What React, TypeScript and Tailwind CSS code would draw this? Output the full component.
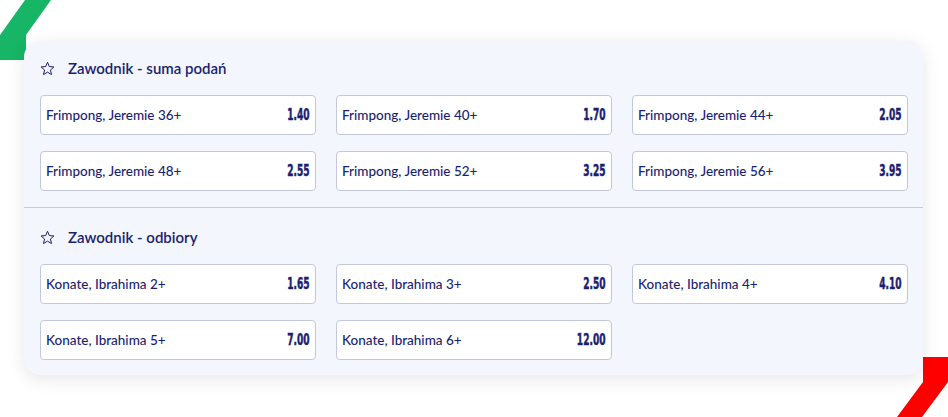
import React from 'react';

type Pick = { label: string; odds: string };

const sections: { title: string; picks: Pick[] }[] = [
  {
    title: 'Zawodnik - suma podań',
    picks: [
      { label: 'Frimpong, Jeremie 36+', odds: '1.40' },
      { label: 'Frimpong, Jeremie 40+', odds: '1.70' },
      { label: 'Frimpong, Jeremie 44+', odds: '2.05' },
      { label: 'Frimpong, Jeremie 48+', odds: '2.55' },
      { label: 'Frimpong, Jeremie 52+', odds: '3.25' },
      { label: 'Frimpong, Jeremie 56+', odds: '3.95' },
    ],
  },
  {
    title: 'Zawodnik - odbiory',
    picks: [
      { label: 'Konate, Ibrahima 2+', odds: '1.65' },
      { label: 'Konate, Ibrahima 3+', odds: '2.50' },
      { label: 'Konate, Ibrahima 4+', odds: '4.10' },
      { label: 'Konate, Ibrahima 5+', odds: '7.00' },
      { label: 'Konate, Ibrahima 6+', odds: '12.00' },
    ],
  },
];

function StarIcon() {
  return (
    <svg width="15" height="15" viewBox="0 0 24 24" fill="none" stroke="#1b1f70" strokeWidth="1.6" strokeLinejoin="miter">
      <polygon points="12,2 14.9,8.9 22.3,9.5 16.7,14.4 18.4,21.7 12,17.8 5.6,21.7 7.3,14.4 1.7,9.5 9.1,8.9" />
    </svg>
  );
}

function OddsButton({ pick }: { pick: Pick }) {
  return (
    <div className="h-10 bg-white border border-[#c3c7dc] rounded-[4px] flex items-center justify-between pl-[5px] pr-[5px] cursor-pointer">
      <span className="text-[13.5px] text-[#1b1f70] font-medium" style={{ fontFamily: 'Lato, sans-serif' }}>
        {pick.label}
      </span>
      <span
        className="inline-block text-[16px] font-bold text-[#1b1f70] scale-x-[0.63] origin-right [-webkit-text-stroke:0.5px_#1b1f70]"
        style={{ fontFamily: '"DejaVu Sans Condensed", "DejaVu Sans", sans-serif' }}
      >
        {pick.odds}
      </span>
    </div>
  );
}

export default function App() {
  return (
    <div className="relative w-[948px] h-[417px] bg-white overflow-hidden" style={{ fontFamily: 'Lato, sans-serif' }}>
      {/* corner decorations */}
      <svg className="absolute left-0 top-0" width="60" height="62">
        <polygon points="25,0 51,0 26,35 26,60 0,60 0,35" fill="#17b566" />
      </svg>
      <svg className="absolute left-[890px] top-[350px]" width="58" height="67">
        <polygon points="33,7 58,7 58,32 32,67 7,67 33,32" fill="#ff0000" />
      </svg>

      <div className="relative pt-[41px] pl-6">
        <div className="w-[899px] bg-[#f3f6fd] rounded-2xl shadow-[0_4px_18px_rgba(0,0,0,0.1)]">
          {sections.map((s, i) => (
            <div key={s.title}>
              {i > 0 && <div className="h-px bg-[#c5cade]" />}
              <div className={`pl-4 pr-[15px] ${i === 0 ? 'pt-[15px] pb-4' : 'pt-[17px] pb-[15px]'}`}>
                <div className="h-6 flex items-center gap-[13px] mb-[15px]">
                  <StarIcon />
                  <span className="text-[15px] font-semibold text-[#1b1f70]">{s.title}</span>
                </div>
                <div className="grid grid-cols-3 gap-x-5 gap-y-4">
                  {s.picks.map((p) => (
                    <OddsButton key={p.label} pick={p} />
                  ))}
                </div>
              </div>
            </div>
          ))}
        </div>
      </div>
    </div>
  );
}
